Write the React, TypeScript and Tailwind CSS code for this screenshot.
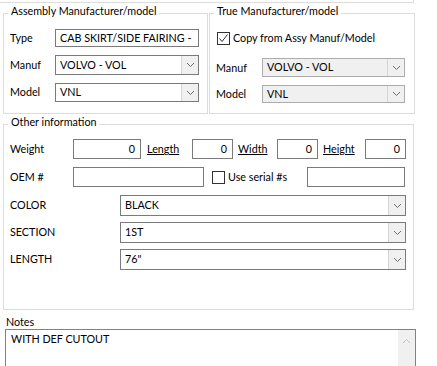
const font = { fontFamily: 'Lato, "Noto Sans", sans-serif' }

function Chevron() {
  return (
    <svg width="9" height="6" viewBox="0 0 9 6" className="block">
      <polyline points="1,1 4.5,4.5 8,1" fill="none" stroke="#6d6d6d" strokeWidth="1" />
    </svg>
  )
}

function Combo({ value, className, disabled }: { value: string; className: string; disabled?: boolean }) {
  return (
    <div
      className={`flex border ${disabled ? 'border-[#acacac] bg-[#f0f0f0]' : 'border-[#7a7a7a] bg-white'} ${className}`}
    >
      <div className="flex-1 flex items-center pl-[4px] leading-none whitespace-nowrap overflow-hidden">{value}</div>
      <div className="w-[17px] flex items-center justify-center bg-[#f0f0f0] border-l border-[#d4d4d4]">
        <Chevron />
      </div>
    </div>
  )
}

function Box({ value, className, right }: { value?: string; className: string; right?: boolean }) {
  return (
    <div
      className={`flex items-center border border-[#7a7a7a] bg-white leading-none whitespace-nowrap overflow-hidden ${right ? 'justify-end pr-[5px]' : 'pl-[4px]'} ${className}`}
    >
      {value}
    </div>
  )
}

function Check({ checked }: { checked?: boolean }) {
  return (
    <div className="w-[13px] h-[13px] border border-[#333] bg-white flex items-center justify-center shrink-0">
      {checked && (
        <svg width="11" height="11" viewBox="0 0 11 11">
          <polyline points="1.5,5.5 4,8.5 9.5,1.5" fill="none" stroke="#333" strokeWidth="1" />
        </svg>
      )}
    </div>
  )
}

function Group({ title, className, children }: { title: string; className: string; children: React.ReactNode }) {
  return (
    <div className={`relative border border-[#dcdcdc] ${className}`}>
      <span className="absolute left-[4px] -top-[8px] px-[3px] bg-white leading-none whitespace-nowrap">{title}</span>
      {children}
    </div>
  )
}

export default function App() {
  return (
    <div className="w-[437px] h-[366px] bg-white overflow-hidden text-[10.75px] text-black" style={font}>
      <div className="h-[3px] w-[414px] border-b border-r border-[#dcdcdc]" />

      <div className="flex mt-[10px] pl-[3px] gap-[1px]">
        <Group title="Assembly Manufacturer/model" className="w-[205px] h-[101px] pl-[6px] pt-[15px]">
          <div className="flex flex-col gap-[8px]">
            <div className="flex items-center">
              <span className="w-[45px]">Type</span>
              <Box value="CAB SKIRT/SIDE FAIRING -" className="w-[144px] h-[18px]" />
            </div>
            <div className="flex items-center">
              <span className="w-[45px]">Manuf</span>
              <Combo value="VOLVO - VOL" className="w-[144px] h-[20px]" />
            </div>
            <div className="flex items-center">
              <span className="w-[45px]">Model</span>
              <Combo value="VNL" className="w-[144px] h-[19px]" />
            </div>
          </div>
        </Group>

        <Group title="True Manufacturer/model" className="w-[206px] h-[101px] pl-[6px] pt-[16px]">
          <div className="flex items-center gap-[3px] pl-[1px]">
            <Check checked />
            <span>Copy from Assy Manuf/Model</span>
          </div>
          <div className="flex flex-col gap-[8px] mt-[12px]">
            <div className="flex items-center">
              <span className="w-[46px]">Manuf</span>
              <Combo value="VOLVO - VOL" className="w-[143px] h-[19px]" disabled />
            </div>
            <div className="flex items-center">
              <span className="w-[46px]">Model</span>
              <Combo value="VNL" className="w-[143px] h-[18px]" disabled />
            </div>
          </div>
        </Group>
      </div>

      <Group title="Other information" className="ml-[3px] mt-[10px] w-[411px] h-[186px] pl-[6px] pt-[14px]">
        <div className="flex items-center h-[20px]">
          <span className="w-[63px]">Weight</span>
          <Box value="0" right className="w-[68px] h-[20px]" />
          <span className="ml-[6px] w-[45px] underline">Length</span>
          <Box value="0" right className="w-[41px] h-[20px]" />
          <span className="ml-[5px] w-[39px] underline">Width</span>
          <Box value="0" right className="w-[41px] h-[20px]" />
          <span className="ml-[5px] w-[42px] underline">Height</span>
          <Box value="0" right className="w-[41px] h-[20px]" />
        </div>
        <div className="flex items-center h-[20px] mt-[8px]">
          <span className="w-[63px]">OEM #</span>
          <Box className="w-[131px] h-[20px]" />
          <div className="ml-[8px] w-[95px] flex items-center gap-[3px]">
            <Check />
            <span>Use serial #s</span>
          </div>
          <Box className="w-[98px] h-[20px]" />
        </div>
        <div className="flex flex-col gap-[6px] mt-[8px]">
          <div className="flex items-center">
            <span className="w-[110px]">COLOR</span>
            <Combo value="BLACK" className="w-[286px] h-[21px]" />
          </div>
          <div className="flex items-center">
            <span className="w-[110px]">SECTION</span>
            <Combo value="1ST" className="w-[286px] h-[21px]" />
          </div>
          <div className="flex items-center">
            <span className="w-[110px]">LENGTH</span>
            <Combo value={'76"'} className="w-[286px] h-[21px]" />
          </div>
        </div>
      </Group>

      <div className="pl-[6px] mt-[7px] leading-none">Notes</div>
      <div className="ml-[5px] mt-[1px] w-[411px] h-[60px] border border-[#828282] flex">
        <div className="flex-1 pl-[5px] pt-[4px] leading-none">WITH DEF CUTOUT</div>
        <div className="w-[17px] bg-[#f0f0f0] flex justify-center pt-[8px]">
          <svg width="9" height="6" viewBox="0 0 9 6">
            <polyline points="1,5 4.5,1.5 8,5" fill="none" stroke="#c2c2c2" strokeWidth="1" />
          </svg>
        </div>
      </div>
    </div>
  )
}
